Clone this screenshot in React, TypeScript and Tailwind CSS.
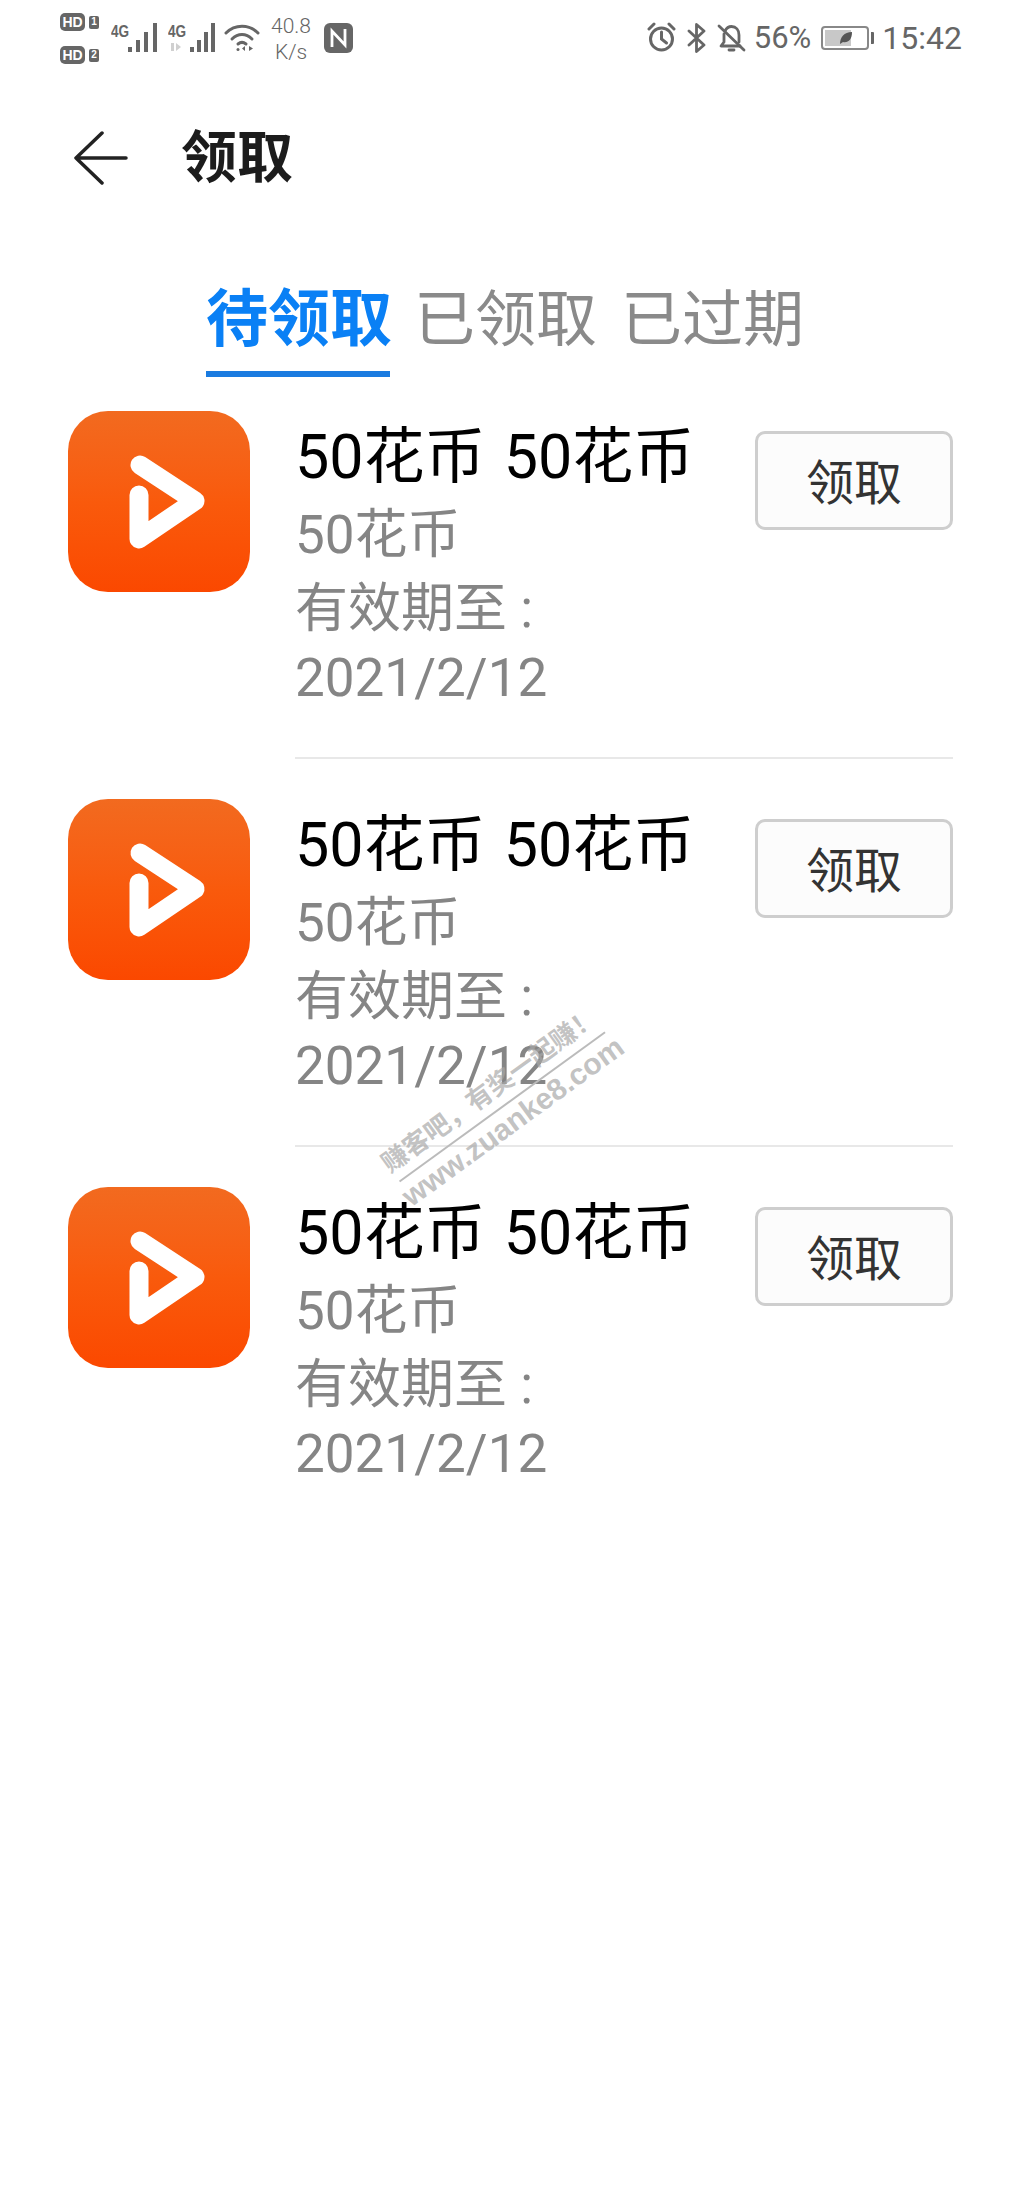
function Hd({ n }: { n: string }) {
  return (
    <div className="flex items-center gap-[4px] h-[18px]">
      <span className="flex items-center justify-center w-[25px] h-[18px] rounded-[5px] bg-[#666] text-white text-[14px] leading-none font-bold font-['Liberation_Sans',sans-serif]">HD</span>
      <span className="flex items-center justify-center w-[10px] h-[13px] rounded-[2px] bg-[#666] text-white text-[10px] leading-none font-bold font-['Liberation_Sans',sans-serif]">{n}</span>
    </div>
  );
}

function Signal({ second }: { second?: boolean }) {
  return (
    <div className="relative w-[48px] h-[30px]">
      <span className="absolute left-0 top-0 text-[17px] leading-[17px] font-bold text-[#666] font-['Liberation_Sans',sans-serif] scale-x-[0.8] origin-left">4G</span>
      {second ? (
        <svg className="absolute left-0 top-0" width="48" height="30" viewBox="0 0 48 30" fill="#666">
          <path d="M3 20h3v8H3zM8 20l5 4-5 4z" fill="#d0d0d0" />
          <rect x="22" y="24" width="4" height="5" />
          <rect x="29" y="17" width="4" height="12" />
          <rect x="36" y="9" width="4" height="20" />
          <rect x="43" y="0" width="4" height="29" />
        </svg>
      ) : (
        <svg className="absolute left-0 top-0" width="48" height="30" viewBox="0 0 48 30" fill="#666">
          <rect x="17" y="24" width="4" height="5" />
          <rect x="25" y="17" width="4" height="12" />
          <rect x="33" y="9" width="4" height="20" />
          <rect x="42" y="0" width="4" height="29" />
        </svg>
      )}
    </div>
  );
}

function StatusBar() {
  return (
    <div className="h-[60px] flex items-start justify-between pl-[60px] pr-[58px] text-[#666]">
      <div className="flex items-start">
        <div className="flex flex-col gap-[15px] pt-[13px] w-[51px]">
          <Hd n="1" />
          <Hd n="2" />
        </div>
        <div className="flex gap-[9px] pt-[23px]">
          <Signal />
          <Signal second />
        </div>
        <svg className="mt-[24px] ml-[8px]" width="36" height="28" viewBox="0 0 36 28" fill="none" stroke="#666" strokeWidth="3" strokeLinecap="round">
          <path d="M2 9C11 0 25 0 34 9" />
          <path d="M8 15c6-6 14-6 20 0" />
          <path d="M14 20c2.500-2 5.500-2 8 0" />
          <circle cx="14" cy="25.500" r="1.500" fill="#666" stroke="none" />
          <path d="M21 22v5l-3-2.500zM25 22v5l4-2.500z" fill="#666" stroke="none" />
        </svg>
        <div className="ml-[10px] w-[42px] pt-[13px] text-center text-[21px] leading-[26px] font-light whitespace-nowrap">
          <div>40.8</div>
          <div>K/s</div>
        </div>
        <svg className="mt-[23px] ml-[12px]" width="29" height="30" viewBox="0 0 29 30">
          <rect width="29" height="30" rx="6" fill="#666" />
          <path d="M8 24V8l13 14V6" fill="none" stroke="#fff" strokeWidth="2.800" />
        </svg>
      </div>
      <div className="flex items-start">
        <svg className="mt-[22px]" width="29" height="30" viewBox="0 0 29 30" fill="none" stroke="#666" strokeWidth="3" strokeLinecap="round">
          <circle cx="14.500" cy="17" r="11" />
          <path d="M14.500 10v7l5 4" />
          <path d="M2 7l5-5M27 7l-5-5" />
        </svg>
        <svg className="mt-[23px] ml-[11px]" width="19" height="30" viewBox="0 0 19 30" fill="none" stroke="#666" strokeWidth="2.800" strokeLinejoin="round" strokeLinecap="round">
          <path d="M2 8l15 14-7.500 6.500v-27L17 8 2 22" />
        </svg>
        <svg className="mt-[23px] ml-[11px]" width="29" height="30" viewBox="0 0 29 30" fill="none" stroke="#666" strokeWidth="2.800" strokeLinecap="round" strokeLinejoin="round">
          <path d="M8 8c1.500-3 3.500-4.500 6.500-4.500C19 3.500 22 7 22 12v7" />
          <path d="M7 11v8l-3 4h19" />
          <path d="M2 3l25 24" />
          <path d="M12 27h5" />
        </svg>
        <span className="ml-[8px] mt-[20px] text-[31px] leading-[36px]">56%</span>
        <div className="ml-[10px] mt-[26px] flex items-center">
          <div className="relative w-[48px] h-[24px] rounded-[4px] border-2 border-[#888] bg-white">
            <div className="absolute left-[2px] top-[2px] bottom-[2px] w-[26px] bg-[#c8c8c8]" />
            <svg className="absolute left-[16px] top-[3px]" width="14" height="14" viewBox="0 0 14 14">
              <path d="M1 13C1 6 5 1 13 1c0 8-4 11-9 10z" fill="#555" />
            </svg>
          </div>
          <div className="ml-[2px] w-[3px] h-[12px] bg-[#666] rounded-r-[1px]" />
        </div>
        <span className="ml-[8px] mt-[19px] text-[32px] leading-[38px]">15:42</span>
      </div>
    </div>
  );
}

function AppIcon() {
  return (
    <div className="w-[182px] h-[181px] shrink-0 rounded-[40px] bg-gradient-to-b from-[#f26a1f] via-[#f95a0c] to-[#fb4800]">
      <svg width="182" height="181" viewBox="0 0 182 181" fill="none" stroke="#fff" strokeWidth="19" strokeLinecap="round" strokeLinejoin="round">
        <path d="M72 54l55 36-56 38V84" />
      </svg>
    </div>
  );
}

function Row({ last }: { last?: boolean }) {
  return (
    <div className="flex h-[382px]">
      <div className="pt-[34px] w-[227px] shrink-0">
        <AppIcon />
      </div>
      <div className={`flex-1 flex items-start ${last ? '' : 'border-b-2 border-[#e8e8e8]'}`}>
        <div className="flex-1 pt-[40px]">
          <div className="text-[61px] leading-[81px] text-black [word-spacing:3px] whitespace-nowrap">50花币 50花币</div>
          <div className="text-[#858585] text-[53px] leading-[74px]">
            <div>50花币</div>
            <div>有效期至 :</div>
            <div className="-mt-[5px]">2021/2/12</div>
          </div>
        </div>
        <div className="mt-[54px] w-[198px] h-[99px] pt-[7px] flex items-center justify-center rounded-[10px] border-[3px] border-[#cecece] bg-[#fcfcfc] text-[48px] text-[#333]">领取</div>
      </div>
    </div>
  );
}

export default function App() {
  return (
    <div className="relative w-[1020px] h-[2210px] overflow-hidden bg-white font-['Roboto','Noto_Sans_CJK_SC',sans-serif]">
      <StatusBar />

      <div className="h-[190px] flex items-center pl-[74px] pt-[6px]">
        <svg width="54" height="54" viewBox="0 0 54 54" fill="none" stroke="#222" strokeWidth="3.500" strokeLinecap="round" strokeLinejoin="round">
          <path d="M28 2L2 27l26 25M2 27h50" />
        </svg>
        <span className="ml-[53px] text-[56px] leading-none font-bold text-[#1c1c1c]">领取</span>
      </div>

      <div className="h-[127px] flex gap-[24px] pl-[206px]">
        <div className="h-full border-b-[6px] border-[#1a7be0] text-[62px] leading-[140px] font-bold text-[#0a80f5] w-[184px] whitespace-nowrap">待领取</div>
        <div className="h-full text-[61px] leading-[140px] text-[#8a8a8a]">已领取</div>
        <div className="h-full text-[61px] leading-[140px] text-[#8a8a8a]">已过期</div>
      </div>

      <div className="flex flex-col gap-[6px] pl-[68px] pr-[67px]">
        <Row />
        <Row />
        <Row last />
      </div>

      {/* watermark over the list */}
      <div className="absolute left-[375px] top-[1071px] w-[254px] -rotate-[36deg] flex flex-col items-center text-[#a8a8a8]/70 font-bold">
        <div className="text-[26px] leading-[30px] pb-[5px] whitespace-nowrap">赚客吧，有奖一起赚！</div>
        <div className="w-full h-[2px] bg-[#bbb]" />
        <div className="text-[30px] leading-[34px] whitespace-nowrap font-['Liberation_Sans',sans-serif]">www.zuanke8.com</div>
      </div>
    </div>
  );
}
